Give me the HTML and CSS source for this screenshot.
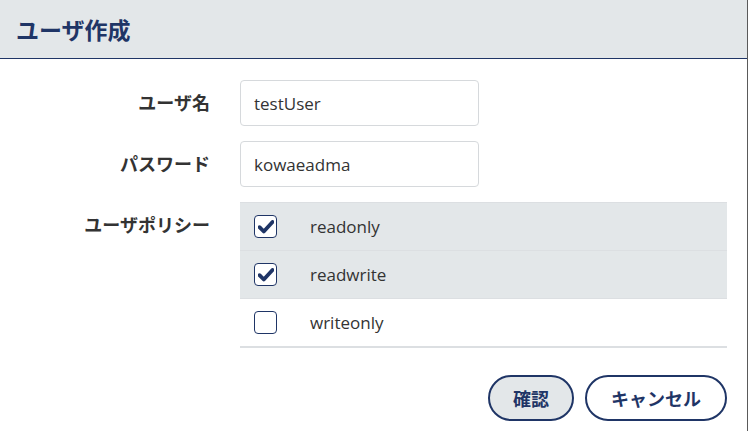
FILE: index.html
```html
<html>
  <head>
    <title>ユーザ作成</title>
    <!-- Styling -->
    <link rel="stylesheet" href="styles.css">
  </head>
  <body>
    <div class="dialog">
      <div class="dialog-head">
        <h1>ユーザ作成</h1>
      </div>

      <form class="dialog-body">
        <div class="row">
          <label class="lbl" for="userName">ユーザ名</label>
          <input class="txt" type="text" id="userName" value="testUser">
        </div>
        <div class="row">
          <label class="lbl" for="password">パスワード</label>
          <input class="txt" type="text" id="password" value="kowaeadma">
        </div>
        <div class="row">
          <span class="lbl">ユーザポリシー</span>
          <div class="policies">
            <div class="policy checked">
              <span class="box">
                <svg width="16" height="14" viewBox="0 0 16 14"><path d="M1.5 7.2 L5.8 11.5 L14.5 2" fill="none" stroke="#1f3566" stroke-width="3.8" stroke-linecap="round" stroke-linejoin="round"/></svg>
              </span>
              <span class="pname">readonly</span>
            </div>
            <div class="policy checked">
              <span class="box">
                <svg width="16" height="14" viewBox="0 0 16 14"><path d="M1.5 7.2 L5.8 11.5 L14.5 2" fill="none" stroke="#1f3566" stroke-width="3.8" stroke-linecap="round" stroke-linejoin="round"/></svg>
              </span>
              <span class="pname">readwrite</span>
            </div>
            <div class="policy">
              <span class="box"></span>
              <span class="pname">writeonly</span>
            </div>
          </div>
        </div>

        <div class="actions">
          <button type="button" class="btn primary">確認</button>
          <button type="button" class="btn">キャンセル</button>
        </div>
      </form>
    </div>
  </body>
</html>
```

FILE: styles.css
```css
body {
    margin: 0;
    background-color: white;
    font-family: "Open Sans", "Noto Sans CJK JP", sans-serif;
    color: #333;
  }

  .dialog {
    width: 748px;
    height: 431px;
    box-sizing: border-box;
    border-right: 1px solid #5a5a5a;
    overflow: hidden;
  }

  .dialog-head {
    height: 58px;
    background-color: #e3e7e9;
    border-bottom: 1px solid #1f3566;
    display: flex;
    align-items: center;
    padding-left: 16px;
  }

  .dialog-head h1 {
    margin: 0;
    font-size: 23px;
    font-weight: bold;
    color: #1f3566;
    font-family: "Noto Sans CJK JP", sans-serif;
  }

  .dialog-body {
    margin: 0;
    padding: 21px 20px 0 0;
  }

  .row {
    display: flex;
    align-items: flex-start;
    gap: 30px;
    margin-bottom: 15px;
  }

  .lbl {
    width: 210px;
    text-align: right;
    font-family: "Noto Sans CJK JP", sans-serif;
    font-weight: bold;
    font-size: 18px;
    line-height: 44px;
    color: #333;
  }

  .txt {
    width: 239px;
    height: 46px;
    box-sizing: border-box;
    border: 1px solid #d6d9dc;
    border-radius: 4px;
    padding: 0 13px;
    font-family: "Open Sans", sans-serif;
    font-size: 17px;
    color: #333;
    outline: none;
  }

  .policies {
    flex: 1;
    border-bottom: 2px solid #dcdfe2;
  }

  .policy {
    height: 48px;
    box-sizing: border-box;
    display: flex;
    align-items: center;
    padding-left: 14px;
    border-top: 1px solid #dcdfe2;
  }

  .policy.checked {
    background-color: #e3e7e9;
  }

  .box {
    width: 23px;
    height: 23px;
    box-sizing: border-box;
    border: 1.5px solid #1f3566;
    border-radius: 4px;
    background-color: white;
    display: flex;
    align-items: center;
    justify-content: center;
  }

  .pname {
    margin-left: 33px;
    font-size: 17px;
    color: #333;
  }

  .actions {
    display: flex;
    justify-content: flex-end;
    gap: 11px;
    margin-top: 27px;
  }

  .btn {
    height: 46px;
    padding: 0 24px;
    border: 2px solid #1f3566;
    border-radius: 23px;
    background-color: white;
    color: #1f3566;
    font-family: "Noto Sans CJK JP", sans-serif;
    font-weight: bold;
    font-size: 18px;
    cursor: pointer;
  }

  .btn.primary {
    background-color: #e3e7e9;
    padding: 0 23px;
  }

  .btn:hover {
    opacity: 0.8;
  }
```
